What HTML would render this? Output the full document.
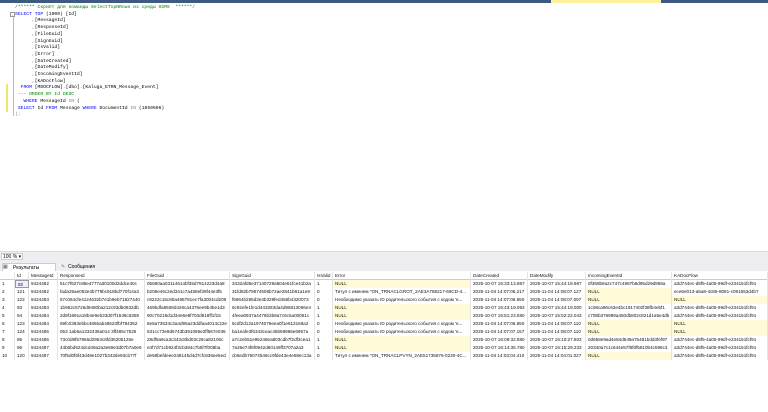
<!DOCTYPE html>
<html><head><meta charset="utf-8"><style>
*{margin:0;padding:0;box-sizing:border-box}
body{width:768px;height:412px;background:#fff;position:relative;overflow:hidden;font-family:"Liberation Sans",sans-serif}
.top{position:absolute;left:0;top:0;width:768px;height:3px;background:#3d5a80}
.ytab{position:absolute;left:551px;top:0;width:110px;height:3px;background:#fff29d}
.code{position:absolute;left:15px;top:5px;width:750px;font-family:"Liberation Mono","DejaVu Sans Mono",monospace;font-size:4.7px;line-height:6.7px;white-space:pre;color:#000}
.k{color:#0000ff}.g{color:#808080}.c{color:#008000}
.gut{position:absolute;left:13px;top:16px;width:1px;height:100px;background:#bbb}
.fold{position:absolute;left:10px;top:12px;width:5px;height:5px;border:1px solid #999;background:#fff;font-size:4px;line-height:3px;text-align:center;color:#555}
.ybar{position:absolute;left:6px;top:84px;width:2px;height:28px;background:#f3e26b}
.zbar{position:absolute;left:0;top:251px;width:768px;height:11px;background:#eeeef2;border-top:1px solid #ddd}
.z{position:absolute;left:1px;top:253px;font-size:5px;width:22px;height:7px;background:#fff;border:1px solid #ccc;padding-left:1px;line-height:6px}
.tabs{position:absolute;left:0;top:262px;width:768px;height:10px;background:#eeeef2;font-size:5px}
.tabs span{position:absolute;top:1px;height:9px;line-height:9px;padding-left:10px}
.grid{position:absolute;left:0;top:271px;width:768px;height:141px;background:#fff}
.row{position:absolute;left:0;width:768px;height:8px;font-size:4.6px;line-height:8px;white-space:nowrap;color:#111}
.row div{position:absolute;top:0;height:8px;overflow:hidden;padding-left:2px;border-right:1px solid #e4e4e4}
.h{background:#fff;border-bottom:1px solid #ccc}
.n{background:#fffbd8}
</style></head><body>
<div class="top"></div><div class="ytab"></div>
<div class="gut"></div><div class="fold">-</div><div class="ybar"></div>
<div class="code"><span class="c">/****** Скрипт для команды SelectTopNRows из среды SSMS  ******/</span>
<span class="k">SELECT TOP</span> (1000) [Id]
      <span class="g">,</span>[MessageId]
      <span class="g">,</span>[ResponseId]
      <span class="g">,</span>[FileGuid]
      <span class="g">,</span>[SignGuid]
      <span class="g">,</span>[IsValid]
      <span class="g">,</span>[Error]
      <span class="g">,</span>[DateCreated]
      <span class="g">,</span>[DateModify]
      <span class="g">,</span>[IncomingEventId]
      <span class="g">,</span>[KADocFlow]
  <span class="k">FROM</span> [MDOCFLOW]<span class="g">.</span>[dbo]<span class="g">.</span>[Kaluga_ETRN_Message_Event]
 <span class="c">--- ORDER BY Id DESC</span>
   <span class="k">WHERE</span> MessageId <span class="g">IN</span> (
 <span class="k">SELECT</span> Id <span class="k">FROM</span> Message <span class="k">WHERE</span> DocumentId <span class="g">IN</span> (1659606)
<span class="g">);</span></div>
<div class="zbar"></div><div class="z">100 % ▾</div>
<div class="tabs"><span style="left:2px;background:#fff;width:54px;border:1px solid #ccc;border-bottom:none">Результаты</span><span style="left:58px">Сообщения</span>
<span style="left:3px;padding:0;color:#555">▦</span><span style="left:61px;padding:0;color:#777">✎</span></div>
<div class="grid" id="g"></div>
<script>
var X=[0,15,29,58,145,230,315,333,471,528,586,672,768];
var H=["","Id","MessageId","ResponseId","FileGuid","SignGuid","IsValid","Error","DateCreated","DateModify","IncomingEventId","KADocFlow"];
var T1="Титул с именем \"ON_TRNACLGROT_2AE3A788217-69CD-4...",T2="Необходимо указать ID родительского события с кодом 'e...",T3="Титул с именем \"ON_TRNACLPVYN_2AE51735876-0230-4C...";
var K="a3d744ec-d8f5-4a05-99df-e234151fcf91";
var R=[
["1","92","9424482","51c7f627c85e4777a30100d2ddce40c","05680aa03114614bf35d7914223d4a8","3432afd6e37140729a804e61fce41b2a","1","NULL","2025-10-07 15:33:13.987","2025-10-07 15:44:18.987","0f368b9a2c747c4987b8d95d29d958a",K],
["2","121","9424482","fada25ae053e4b779bc918bd770f14a3","b208e46c2ed341c7a458ef39f44e3f5","31fd82b79574508b72ae2841b61a1e8","0",T1,"2025-11-04 14:07:06.217","2025-11-04 14:08:07.127","NULL","ece6e013-a5a8-4c85-8081-c091553d4b7"],
["3","122","9424483","57c064cfe4124632b7e1b9eb71827440","c9222c15c80a495781ec7fa3004cd209","f6664b285d3e4b329fed456b4320073","0",T2,"2025-11-04 14:07:06.550","2025-11-04 14:08:07.097","NULL","NULL"],
["4","93","9424483","1b952c5726d9480ba212c93db0832db","469bdfa8508d426ca4376ee9b4be1d3","6c92efe1fe1d443283da4d95813066e4","1","NULL","2025-10-07 15:43:19.093","2025-10-07 15:44:19.000","1c08ca96c63e4bc1917402f38fb4ebf1",K],
["5","94","9424484","2d9f1691a18b4e9eb33d07f1536c6359","90c70218d1d34e6e8f703d918ff1f15","4feea0937a4476b3b9a7c6c5a00051c","1","NULL","2025-10-07 15:51:23.580","2025-10-07 15:52:22.043","c708b376989a450db802c821d1a5e4db",K],
["6","123","9424484","59fc0383ebbc4855ab48623fbf784352","8e5a73534c3a4d95a23ddfaa4014c22e","6cdf2d12a1974079eea0f1e613166a2","0",T2,"2025-11-04 14:07:06.850","2025-11-04 14:08:07.110","NULL","NULL"],
["7","124","9424485","053 1ab6a1332436a014 3ff485c7525","531cc73e9d5743b391085e2ff567e036","ba1eafe3f6343ceac45b68966e6957a","0",T2,"2025-11-04 14:07:07.157","2025-11-04 14:08:07.110","NULL","NULL"],
["8","95","9424485","73c0d9f57856d2953c8fd36205126e","28df5a9ca3c343c8bd03c26ca82106c","a7c2eb51e95248ea803cdb7f2df3cea1","1","NULL","2025-10-07 16:09:32.580","2025-10-07 16:10:27.603","0d658e9ad4e84d549a75481bdd3fef97",K],
["9","96","9424487","44b0bd524dcd49a2a3e69e3d07b7a0e6","e4f7d71cb924f3cb384c7b5f7f008ba","7a26e74f8f0942d60149ff3707a2a3","1","NULL","2025-10-07 16:14:35.780","2025-10-07 16:15:29.233","20340a7c1c644e57f8f0f5810b4c598c3",K],
["10","120","9424487","70f5d0f6f43d49e1027b343de93cb77f","de58befdeee248145d4d7cfc836ee5ed","cb6edb76074546cc9fde43e4e58ec13a","0",T3,"2025-11-04 14:03:04.410","2025-11-04 14:04:01.027","NULL",K]];
var g=document.getElementById('g'),s='';
function row(c,top,cls){var h='<div class="row '+(cls||'')+'" style="top:'+top+'px">';
for(var i=0;i<c.length;i++){var n=(c[i]=="NULL"&&i>=7)?' n':'';var st='left:'+X[i]+'px;width:'+(X[i+1]-X[i])+'px';
if(cls!='h'&&i==1&&top==9)st+=';border:1px solid #999;background:#eef';
h+='<div class="'+n+'" style="'+st+'">'+c[i]+'</div>';}return h+'</div>';}
s+=row(H,1,'h');
for(var r=0;r<R.length;r++)s+=row(R[r],9+r*8);
g.innerHTML=s;
</script>
</body></html>
